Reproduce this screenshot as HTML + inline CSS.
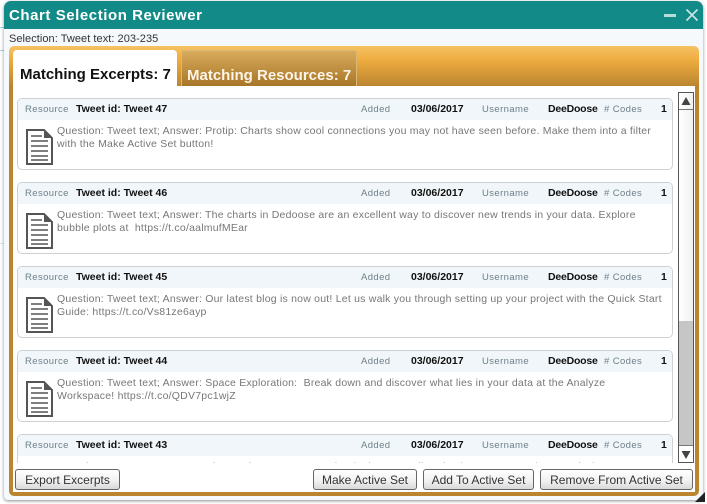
<!DOCTYPE html>
<html><head><meta charset="utf-8"><style>
*{box-sizing:border-box}
html,body{margin:0;padding:0;width:707px;height:504px;overflow:hidden;background:#fff;font-family:"Liberation Sans",sans-serif}
.a{position:absolute;white-space:nowrap}
#win{left:4px;top:1px;width:699px;height:499px;background:#f6f9fc;border-radius:7px 7px 4px 4px;box-shadow:0 1px 3px rgba(0,0,0,.45)}
#title{left:4px;top:1px;width:699px;height:28px;background:#128a87;border-radius:7px 7px 0 0}
#panel{left:9px;top:46px;width:690px;height:450px;border-radius:5px;background:linear-gradient(#f6c263 0,#eeac3f 14px,#bb8530 40px,#bb8530 100%)}
#white{left:13px;top:86px;width:682px;height:406px;background:#fff}
#clip{left:13px;top:92px;width:664px;height:371px;overflow:hidden}
.card{position:absolute;left:4px;width:656px;height:72px;border:1px solid #ccd1d4;border-radius:5px;background:#fff;overflow:hidden}
.hd{position:absolute;left:0;top:0;width:100%;height:21px;background:#f0f6fa}
.l{position:absolute;top:5px;font-size:9.5px;letter-spacing:.4px;color:#6f8089;white-space:nowrap}
.v{position:absolute;top:4px;font-size:10.5px;color:#111;white-space:nowrap}
.d{letter-spacing:-.22px}
.b{font-weight:bold}
.t{position:absolute;left:39px;font-size:10.5px;letter-spacing:.22px;color:#777;white-space:nowrap;line-height:13px}
.ic{position:absolute;left:8px;top:30px}
.btn{position:absolute;top:469px;height:21px;border:1px solid #666;border-radius:3px;background:linear-gradient(#fff,#f2f2f2 55%,#d8d8d8);font-size:12px;color:#333;text-align:center;line-height:20px;white-space:nowrap}
</style></head><body>
<div class="a" style="left:0;top:27px;width:4px;height:1px;background:#a8d4e6"></div>
<div class="a" style="left:0;top:50px;width:4px;height:1px;background:#a8d4e6"></div>
<div class="a" style="left:0;top:243px;width:4px;height:1px;background:#d6e8f0"></div>
<div class="a" id="win"></div>
<div class="a" id="title"></div>
<div class="a" style="left:9px;top:7px;font-size:15px;font-weight:bold;color:#fff;letter-spacing:.56px;line-height:18px">Chart Selection Reviewer</div>
<div class="a" style="left:664px;top:14px;width:12px;height:3px;background:#b5dcda"></div>
<svg class="a" style="left:685px;top:8px" width="14" height="14"><path d="M1.5 1.5L12.5 12.5M12.5 1.5L1.5 12.5" stroke="#c8e6e4" stroke-width="1.7"/></svg>
<div class="a" style="left:9px;top:32px;font-size:11px;letter-spacing:.05px;color:#333;line-height:14px">Selection: Tweet text: 203-235</div>
<div class="a" id="panel"></div>
<div class="a" style="left:181px;top:50px;width:176px;height:36px;border:1px solid #dcb878;border-bottom:0;border-radius:3px 3px 0 0;background:linear-gradient(#d9ab5c,#a87628)"></div>
<div class="a" style="left:187px;top:68px;font-size:15px;font-weight:bold;color:#fdf5e8;line-height:16px">Matching Resources: 7</div>
<div class="a" style="left:13px;top:50px;width:164px;height:37px;background:#fff;border-radius:4px 4px 0 0"></div>
<div class="a" style="left:20px;top:67px;font-size:15px;font-weight:bold;color:#111;line-height:16px">Matching Excerpts: 7</div>
<div class="a" id="white"></div>
<div class="a" id="clip">

<div class="card" style="top:6px"><div class="hd"></div>
<span class="l" style="left:7px">Resource</span><span class="v b" style="left:58px">Tweet id: Tweet 47</span>
<span class="l" style="left:343px">Added</span><span class="v b" style="left:393px">03/06/2017</span>
<span class="l" style="left:464px">Username</span><span class="v b d" style="left:530px">DeeDoose</span>
<span class="l" style="left:586px"># Codes</span><span class="v b" style="left:643px">1</span>
<svg class="ic" width="27" height="36" viewBox="0 0 27 36"><path d="M1 1H18L26 9V35H1Z" fill="#fff" stroke="#555" stroke-width="2"/><path d="M18 1V9H26Z" fill="#555"/><path d="M5 7H16M5 12H22M5 17H22M5 22H22M5 27H22M5 31H22" stroke="#555" stroke-width="1.4"/></svg>
<div class="t" style="top:26px">Question: Tweet text; Answer: Protip: Charts show cool connections you may not have seen before. Make them into a filter<br>with the Make Active Set button!</div></div>

<div class="card" style="top:90px"><div class="hd"></div>
<span class="l" style="left:7px">Resource</span><span class="v b" style="left:58px">Tweet id: Tweet 46</span>
<span class="l" style="left:343px">Added</span><span class="v b" style="left:393px">03/06/2017</span>
<span class="l" style="left:464px">Username</span><span class="v b d" style="left:530px">DeeDoose</span>
<span class="l" style="left:586px"># Codes</span><span class="v b" style="left:643px">1</span>
<svg class="ic" width="27" height="36" viewBox="0 0 27 36"><path d="M1 1H18L26 9V35H1Z" fill="#fff" stroke="#555" stroke-width="2"/><path d="M18 1V9H26Z" fill="#555"/><path d="M5 7H16M5 12H22M5 17H22M5 22H22M5 27H22M5 31H22" stroke="#555" stroke-width="1.4"/></svg>
<div class="t" style="top:26px">Question: Tweet text; Answer: The charts in Dedoose are an excellent way to discover new trends in your data. Explore<br>bubble plots at&nbsp; https://t.co/aalmufMEar</div></div>

<div class="card" style="top:174px"><div class="hd"></div>
<span class="l" style="left:7px">Resource</span><span class="v b" style="left:58px">Tweet id: Tweet 45</span>
<span class="l" style="left:343px">Added</span><span class="v b" style="left:393px">03/06/2017</span>
<span class="l" style="left:464px">Username</span><span class="v b d" style="left:530px">DeeDoose</span>
<span class="l" style="left:586px"># Codes</span><span class="v b" style="left:643px">1</span>
<svg class="ic" width="27" height="36" viewBox="0 0 27 36"><path d="M1 1H18L26 9V35H1Z" fill="#fff" stroke="#555" stroke-width="2"/><path d="M18 1V9H26Z" fill="#555"/><path d="M5 7H16M5 12H22M5 17H22M5 22H22M5 27H22M5 31H22" stroke="#555" stroke-width="1.4"/></svg>
<div class="t" style="top:26px">Question: Tweet text; Answer: Our latest blog is now out! Let us walk you through setting up your project with the Quick Start<br>Guide: https://t.co/Vs81ze6ayp</div></div>

<div class="card" style="top:258px"><div class="hd"></div>
<span class="l" style="left:7px">Resource</span><span class="v b" style="left:58px">Tweet id: Tweet 44</span>
<span class="l" style="left:343px">Added</span><span class="v b" style="left:393px">03/06/2017</span>
<span class="l" style="left:464px">Username</span><span class="v b d" style="left:530px">DeeDoose</span>
<span class="l" style="left:586px"># Codes</span><span class="v b" style="left:643px">1</span>
<svg class="ic" width="27" height="36" viewBox="0 0 27 36"><path d="M1 1H18L26 9V35H1Z" fill="#fff" stroke="#555" stroke-width="2"/><path d="M18 1V9H26Z" fill="#555"/><path d="M5 7H16M5 12H22M5 17H22M5 22H22M5 27H22M5 31H22" stroke="#555" stroke-width="1.4"/></svg>
<div class="t" style="top:26px">Question: Tweet text; Answer: Space Exploration:&nbsp; Break down and discover what lies in your data at the Analyze<br>Workspace! https://t.co/QDV7pc1wjZ</div></div>

<div class="card" style="top:342px"><div class="hd"></div>
<span class="l" style="left:7px">Resource</span><span class="v b" style="left:58px">Tweet id: Tweet 43</span>
<span class="l" style="left:343px">Added</span><span class="v b" style="left:393px">03/06/2017</span>
<span class="l" style="left:464px">Username</span><span class="v b d" style="left:530px">DeeDoose</span>
<span class="l" style="left:586px"># Codes</span><span class="v b" style="left:643px">1</span>
<div class="t" style="top:26px">Question: Tweet text; Answer: Diaz et al. 2007 Have another look: A 1:1 Edit Selection To Export Charts and what</div></div>
</div>

<div class="a" style="left:678px;top:92px;width:16px;height:371px;border:1px solid #555;background:#c6c6c6"></div>
<div class="a" style="left:679px;top:93px;width:14px;height:228px;background:linear-gradient(90deg,#fff,#f0f0f0)"></div>
<div class="a" style="left:679px;top:109px;width:14px;height:1px;background:#777"></div>
<div class="a" style="left:679px;top:445px;width:14px;height:17px;background:#fff;border-top:1px solid #777"></div>
<svg class="a" style="left:680px;top:96px" width="12" height="10"><path d="M6 1L10.5 9H1.5Z" fill="#444"/></svg>
<svg class="a" style="left:680px;top:450px" width="12" height="10"><path d="M1.5 1H10.5L6 9Z" fill="#444"/></svg>

<div class="btn" style="left:15px;width:105px">Export Excerpts</div>
<div class="btn" style="left:313px;width:104px">Make Active Set</div>
<div class="btn" style="left:423px;width:111px">Add To Active Set</div>
<div class="btn" style="left:540px;width:153px">Remove From Active Set</div>
<svg class="a" style="left:694px;top:491px" width="12" height="12"><path d="M1 11L11 1V11Z" fill="#222"/></svg>
</body></html>
